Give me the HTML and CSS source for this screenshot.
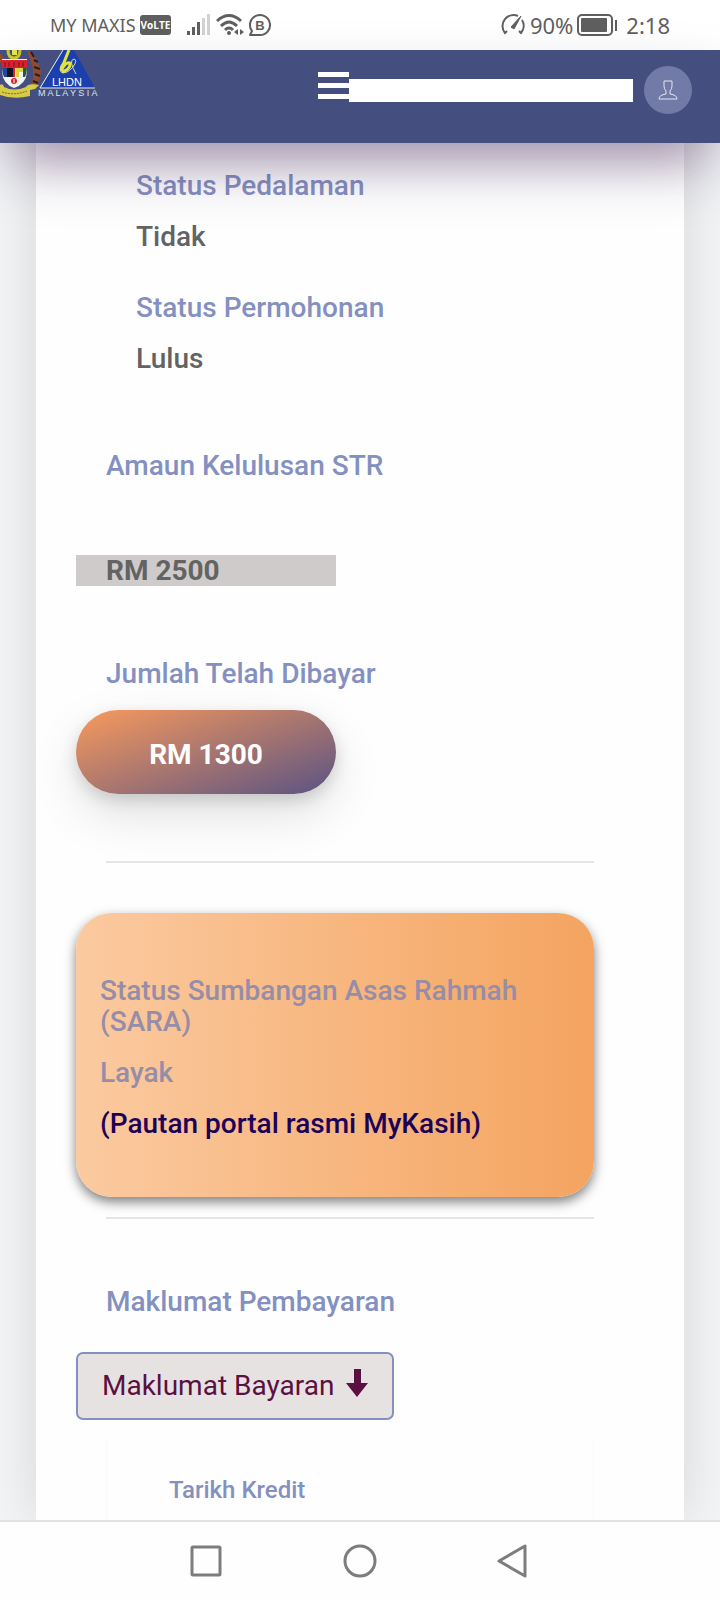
FILE: index.html
```html
<!DOCTYPE html>
<html lang="ms">
<head>
  <meta charset="UTF-8">
  <meta name="viewport" content="width=device-width, initial-scale=1">
  <title>Status STR</title>
  <link rel="stylesheet" href="styles.css">
</head>
<body>
  <div class="statusbar">
    <div class="statusbar-group">
      <span class="carrier">MY MAXIS</span>
      <span class="volte">VoLTE</span>
      <svg class="signal" width="24" height="24" viewBox="0 0 24 24">
        <path fill="#5f5f5f" d="M1 18h3v4H1zM6 14h3v8H6zM11 9h3v13h-3z"/>
        <path fill="#d2d2d2" d="M16 5h3v17h-3zM21 1h3v21h-3z"/>
      </svg>
      <svg width="28" height="24" viewBox="0 0 28 24" fill="none" stroke="#5f5f5f" stroke-width="3">
        <path d="M1 8Q13 -3 25 8M5 13Q13 5 21 13M9 17Q13 13 17 17"/>
        <circle cx="13" cy="20" r="2" fill="#5f5f5f" stroke="none"/>
        <path fill="#5f5f5f" stroke="none" d="M22 16v6l-4-3zM24 16v6l4-3z"/>
      </svg>
      <svg width="24" height="24" viewBox="0 0 24 24">
        <path d="M4 18A10 10 0 1 1 12 22H2z" fill="none" stroke="#5f5f5f" stroke-width="2" stroke-linejoin="round"/>
        <text class="badge-letter" x="12" y="17" text-anchor="middle">B</text>
      </svg>
    </div>
    <div class="statusbar-group">
      <svg width="26" height="24" viewBox="0 0 26 24" fill="none" stroke="#5f5f5f" stroke-width="2">
        <path d="M18 3A11 11 0 0 0 5 20L7 18M22 7A11 11 0 0 1 21 20L19 18"/>
        <path d="M21 3L14 16L11 14z" fill="#5f5f5f" stroke-width="1"/>
      </svg>
      <span class="status-number">90%</span>
      <svg class="battery" width="41" height="24" viewBox="0 0 41 24">
        <rect x="1" y="2" width="34" height="20" rx="4" fill="none" stroke="#5f5f5f" stroke-width="2"/>
        <rect x="4" y="5" width="26" height="14" rx="1" fill="#5f5f5f"/>
        <rect x="38" y="7" width="2" height="11" fill="#5f5f5f"/>
      </svg>
      <span class="status-number">2:18</span>
    </div>
  </div>

  <header class="topbar">
    <svg class="logo" width="100" height="48" viewBox="0 0 100 48">
      <!-- jata negara -->
      <path d="M27 0Q34 3 37 10L41 20Q41 30 35 38L31 35Q36 25 31 12z" fill="#8f4a30"/>
      <path d="M31 2l3 5M34 10l4 2M34 17l6 2M35 24l5 2M33 31l5 2" stroke="#2a1c20" stroke-width="2"/>
      <path d="M0 3L4 8L0 14z" fill="#8f4a30"/>
      <path d="M8 0Q8 8 14 8Q20 8 20 0" fill="none" stroke="#c9c52f" stroke-width="3"/>
      <path d="M12 0h5v5h-5z" fill="#e8e04a"/>
      <path d="M2 9h25v13Q26 34 14 38Q3 34 2 22z" fill="#f5f5ef"/>
      <path d="M2 10h25v8H2z" fill="#d9202c"/>
      <path d="M5 12v5M9 12v5M14 12v5M19 12v5M23 12v5" stroke="#6f1720" stroke-width="1"/>
      <path d="M2 18h5v9H4Q2 23 2 18z" fill="#22469a"/>
      <path d="M7 18h6v9H7z" fill="#15151d"/>
      <path d="M13 18h2v9h-2z" fill="#d9202c"/>
      <path d="M16 18h7v4h-4v5h-3z" fill="#d8d63a"/>
      <path d="M23 18h4q0 5-2 9h-2z" fill="#285938"/>
      <circle cx="14" cy="31" r="3" fill="#d9202c"/>
      <path d="M14 29v4" stroke="#fff"/>
      <path d="M0 35Q3 33 4 37Q14 42 26 37Q28 33 39 35L35 39L30 40V46Q14 50 0 45z" fill="#d7cb45"/>
      <path d="M2 42Q14 46 27 41" fill="none" stroke="#6f6a31" stroke-dasharray="2 1"/>
      <!-- lhdn -->
      <path d="M63 0H74L95 38H41z" fill="#1c3fae"/>
      <path d="M63 0L40 38H95" fill="none" stroke="#e8ecf7" stroke-width="1"/>
      <path d="M69 0L61 20M61 21Q66 11 70 13Q71 19 62 22" fill="none" stroke="#e4e33b" stroke-width="3"/>
      <path d="M66 10Q58 16 61 22Q66 25 73 17Q78 10 74 9Q68 10 76 24" fill="none" stroke="#d8dc8a" stroke-width="1"/>
      <text class="logo-name" x="52" y="36">LHDN</text>
      <text class="logo-country" x="38" y="46">M A L A Y S I A</text>
    </svg>
    <button class="menu-button" type="button" aria-label="Menu">
      <svg width="31" height="28" viewBox="0 0 31 28" fill="#fff">
        <path d="M0 0h31v5H0zM0 11h31v5H0zM0 22h31v5H0z"/>
      </svg>
    </button>
    <div class="user-name"></div>
    <button class="avatar" type="button" aria-label="Profil">
      <svg width="22" height="22" viewBox="0 0 22 22" fill="none" stroke="#e4e6f2" stroke-width="1">
        <path d="M9 12Q7 10 7 7V2H15V7Q15 10 13 12V15Q20 16 20 20H2Q2 16 9 15z"/>
      </svg>
    </button>
  </header>

  <main class="page">
    <section class="sheet">
      <dl class="status-list">
        <dt>Status Pedalaman</dt>
        <dd>Tidak</dd>
        <dt>Status Permohonan</dt>
        <dd>Lulus</dd>
      </dl>

      <h3 class="label">Amaun Kelulusan STR</h3>
      <div class="amount">RM 2500</div>

      <h3 class="label">Jumlah Telah Dibayar</h3>
      <div class="paid">RM 1300</div>

      <hr class="divider">

      <div class="sara">
        <p>Status Sumbangan Asas Rahmah (SARA)</p>
        <p>Layak</p>
        <a href="#">(Pautan portal rasmi MyKasih)</a>
      </div>

      <hr class="divider">

      <h3 class="label label-payment">Maklumat Pembayaran</h3>
      <button class="pay-button" type="button">
        Maklumat Bayaran
        <svg width="22" height="28" viewBox="0 0 22 28" fill="#5a1040">
          <path d="M8 0h7v14h7L11 28L0 14h8z"/>
        </svg>
      </button>

      <div class="credit">
        <h4>Tarikh Kredit</h4>
      </div>
    </section>
  </main>

  <nav class="navbar">
    <button type="button" aria-label="Recent">
      <svg width="36" height="36" viewBox="0 0 36 36"><rect x="4" y="4" width="28" height="28" rx="1"/></svg>
    </button>
    <button type="button" aria-label="Home">
      <svg width="36" height="36" viewBox="0 0 36 36"><circle cx="18" cy="18" r="15"/></svg>
    </button>
    <button type="button" aria-label="Back">
      <svg width="36" height="36" viewBox="0 0 36 36"><path d="M29 3V33L3 18z"/></svg>
    </button>
  </nav>
</body>
</html>
```

FILE: styles.css
```css
* {
  margin: 0;
  padding: 0;
  box-sizing: border-box;
}
body {
  min-height: 100vh;
  display: flex;
  flex-direction: column;
  background: #f2f4f6;
  font-family: Roboto, "Liberation Sans", sans-serif;
  font-size: 28px;
  line-height: 31px;
  color: #636363;
}
button {
  border: none;
  background: none;
  font: inherit;
  cursor: pointer;
}
svg {
  display: block;
}

/* phone status bar */
.statusbar {
  display: flex;
  justify-content: space-between;
  align-items: center;
  height: 50px;
  padding: 0 50px;
  background: #fff;
  font-family: "Noto Sans", sans-serif;
  color: #5f5f5f;
}
.statusbar-group {
  display: flex;
  align-items: center;
  gap: 4px;
}
.carrier {
  font-size: 18px;
}
.volte {
  padding: 0 1px;
  border-radius: 3px;
  background: #5f5f5f;
  color: #fff;
  font: bold 10px/20px "Open Sans", sans-serif;
}
.signal {
  margin: 0 2px 0 11px;
}
.badge-letter {
  font: bold 13px "Liberation Sans", sans-serif;
  fill: #5f5f5f;
}
.status-number {
  font-size: 22px;
}
.battery {
  margin-right: 4px;
}

/* header */
.topbar {
  position: relative;
  z-index: 2;
  display: flex;
  align-items: flex-start;
  height: 93px;
  padding-right: 28px;
  background: #444f80;
  box-shadow: 0 28px 55px -10px rgba(60, 30, 80, 0.52);
}
.logo {
  margin-right: auto;
}
.logo-name {
  font: 11px "Liberation Sans", sans-serif;
  fill: #fff;
}
.logo-country {
  font: 9px "Liberation Sans", sans-serif;
  fill: #dfe3f0;
}
.menu-button {
  margin-top: 22px;
}
.user-name {
  flex: 0 1 284px;
  height: 23px;
  margin-top: 29px;
  background: #fff;
}
.avatar {
  display: flex;
  justify-content: center;
  align-items: center;
  width: 48px;
  height: 48px;
  margin: 16px 0 0 11px;
  border-radius: 50%;
  background: #727aa8;
}

/* content */
.page {
  flex: 1;
  display: flex;
  padding: 0 36px;
}
.sheet {
  flex: 1;
  padding: 27px 90px 0 40px;
  background: #fefefe;
  box-shadow: 0 0 50px rgba(0, 0, 0, 0.12);
}
.status-list {
  padding-left: 60px;
  font-weight: 500;
}
.status-list dt {
  margin-bottom: 20px;
  color: #8490bf;
}
.status-list dd {
  margin-bottom: 40px;
}
.label {
  padding-left: 30px;
  font-size: 28px;
  font-weight: 500;
  color: #8490bf;
}
.status-list + .label {
  margin-top: 76px;
}
.amount {
  width: 260px;
  max-width: 100%;
  margin: 74px 0 72px;
  padding-left: 30px;
  background: #d0cbcb;
  font-weight: bold;
}
.paid {
  width: 260px;
  max-width: 100%;
  margin-top: 21px;
  padding-top: 5px;
  border-radius: 42px;
  background: linear-gradient(160deg, #f99a5c, #5a5383);
  box-shadow: 0 20px 50px rgba(0, 0, 0, 0.12), 0 6px 16px rgba(0, 0, 0, 0.14);
  color: #fff;
  font-weight: bold;
  line-height: 79px;
  text-align: center;
}
.divider {
  margin-left: 30px;
  border: none;
  border-top: 2px solid #e6e6e6;
}
.paid + .divider {
  margin-top: 67px;
}
.sara {
  display: flex;
  flex-direction: column;
  gap: 20px;
  margin: 50px 0 20px;
  padding: 62px 24px 58px;
  border-radius: 36px;
  background: linear-gradient(to right, #fbcaa0, #f4a460);
  box-shadow: 0 5px 12px rgba(0, 0, 0, 0.5);
  color: #968da8;
  font-weight: 500;
}
.sara a {
  color: #1c0058;
  text-decoration: none;
}
.label-payment {
  margin-top: 67px;
}
.pay-button {
  display: flex;
  gap: 12px;
  margin-top: 35px;
  padding: 16px 24px 17px;
  border: 2px solid #8490bf;
  border-radius: 7px;
  background: #e7e2e2;
  color: #5a1040;
}
.pay-button svg {
  margin-top: -1px;
}
.credit {
  margin: 20px 0 0 30px;
  padding: 35px 62px 14px;
  border: solid #fafafa;
  border-width: 0 1px;
}
.credit h4 {
  font-size: 24px;
  font-weight: 500;
  color: #8490bf;
}

/* android buttons */
.navbar {
  position: relative;
  display: flex;
  justify-content: center;
  gap: 118px;
  height: 80px;
  padding-bottom: 1px;
  border-top: 2px solid #e2e2e2;
  background: #fefefe;
}
.navbar svg {
  fill: none;
  stroke: #7d7d7d;
  stroke-width: 3;
  stroke-linejoin: round;
}
```
